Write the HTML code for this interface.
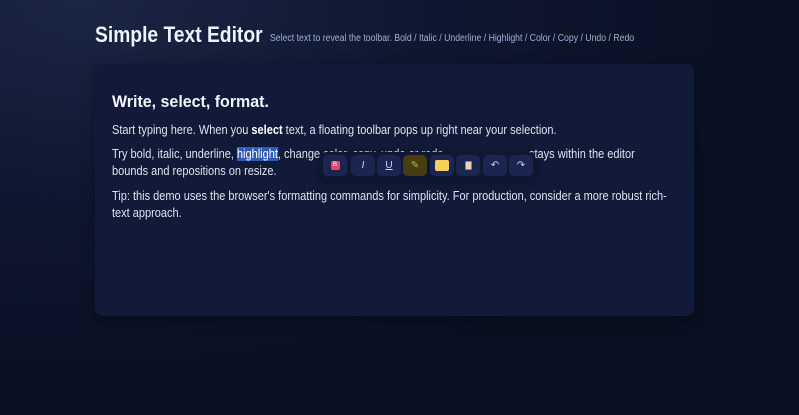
<!DOCTYPE html>
<html><head><style>
*{margin:0;padding:0;box-sizing:border-box}
html,body{width:799px;height:415px;overflow:hidden}
body{background:radial-gradient(ellipse 700px 400px at 80px 0px,#1b2645 0%,#0f1730 50%,#0a1022 100%);font-family:"Liberation Sans",sans-serif;color:#e6ebf5;position:relative}
.abs{position:absolute;white-space:nowrap;transform-origin:0 0}
.card{position:absolute;left:95px;top:64px;width:599px;height:252px;background:#111a38;border-radius:8px;box-shadow:0 4px 14px rgba(0,0,0,.35)}
.t{font-size:12.5px;color:#dde3ef;transform:scaleX(.88)}
.hl{background:#2f5bb8;color:#fff}
.tb{position:absolute;left:320px;top:152px;width:215px;height:28px;background:#0f1733;border-radius:7px;box-shadow:0 2px 8px rgba(0,0,0,.4)}
.b{position:absolute;top:155px;width:24px;height:21px;background:#1a2550;border-radius:5px;color:#cfd6ea;font-size:10px;text-align:center;line-height:21px}
</style></head><body>
<div class="abs" style="left:95px;top:22px;font-size:22px;font-weight:bold;color:#eef2fa;transform:scaleX(.875)">Simple Text Editor</div>
<div class="abs" style="left:270px;top:33px;font-size:10px;color:#9fb0d8;transform:scaleX(.87)">Select text to reveal the toolbar. Bold / Italic / Underline / Highlight / Color / Copy / Undo / Redo</div>
<div class="card"></div>
<div class="abs" style="left:112px;top:92px;font-size:17px;font-weight:bold;color:#f2f5fb;transform:scaleX(.94)">Write, select, format.</div>
<div class="abs t" style="left:112px;top:123px">Start typing here. When you <b style="color:#fff">select</b> text, a floating toolbar pops up right near your selection.</div>
<div class="abs t" style="left:112px;top:147px">Try bold, italic, underline, <span class="hl">highlight</span>, change color, copy, undo or redo</div>
<div class="abs t" style="left:529px;top:147px">stays within the editor</div>
<div class="tb"></div>
<div class="abs t" style="left:112px;top:164px">bounds and repositions on resize.</div>
<div class="abs t" style="left:112px;top:189px">Tip: this demo uses the browser's formatting commands for simplicity. For production, consider a more robust rich-</div>
<div class="abs t" style="left:112px;top:206px">text approach.</div>
<div class="b" style="left:323px"><span style="display:inline-block;width:9px;height:9px;background:#e8437a;border-radius:2px;font-size:6px;line-height:9px;color:#fff;vertical-align:middle">B</span></div>
<div class="b" style="left:351px;font-style:italic">I</div>
<div class="b" style="left:377px;text-decoration:underline">U</div>
<div class="b" style="left:403px;background:#4a3c12;color:#9bc24a">✎</div>
<div class="b" style="left:430px"><span style="display:inline-block;width:14px;height:11px;background:#f8cf5a;border-radius:2px;vertical-align:middle"></span></div>
<div class="b" style="left:456px"><span style="display:inline-block;width:7px;height:9px;background:#e9d6b8;border:1px solid #a57a4c;border-radius:1px;vertical-align:middle"></span></div>
<div class="b" style="left:483px">↶</div>
<div class="b" style="left:509px">↷</div>
</body></html>
